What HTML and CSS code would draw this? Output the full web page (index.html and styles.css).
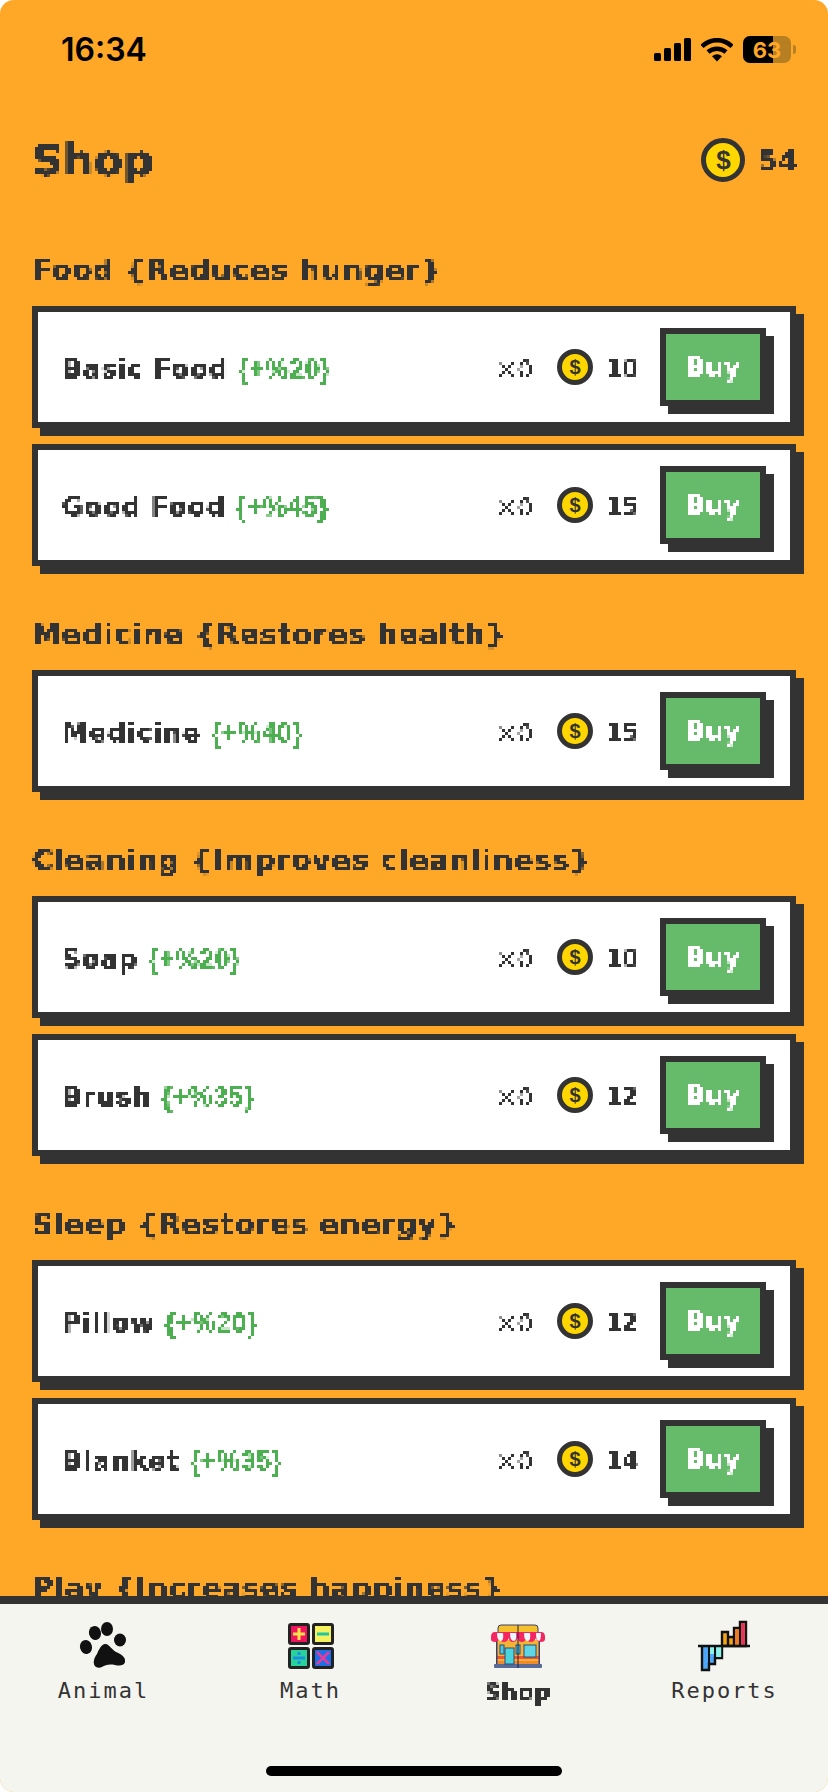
FILE: index.html
```html
<!DOCTYPE html>
<html lang="en">
<head>
<meta charset="utf-8">
<title>Shop</title>
<link rel="stylesheet" href="styles.css">
</head>
<body>
<svg class="defs" width="0" height="0" aria-hidden="true">
  <filter id="px3" x="0" y="0" width="100%" height="100%" color-interpolation-filters="sRGB">
    <feFlood x="1" y="1" width="1" height="1"/>
    <feComposite width="3" height="3"/>
    <feTile result="grid"/>
    <feComposite in="SourceGraphic" in2="grid" operator="in"/>
    <feMorphology operator="dilate" radius="1"/>
    <feComponentTransfer><feFuncA type="linear" slope="3" intercept="-0.5"/></feComponentTransfer>
  </filter>
</svg>
<div class="screen">
  <div class="status">
    <span class="time">16:34</span>
    <div class="status-icons">
      <svg class="signal" width="37" height="23" viewBox="0 0 37 23"><rect x="0" y="15" width="7" height="8" rx="1.500"/><rect x="10" y="10" width="7" height="13" rx="1.500"/><rect x="20" y="5" width="7" height="18" rx="1.500"/><rect x="30" y="0" width="7" height="23" rx="1.500"/></svg>
      <svg class="wifi" width="32" height="24" viewBox="0 0 32 24"><path d="M1 8.500C9.500 0 22.500 0 31 8.500"/><path d="M7 14C12 9.500 20 9.500 25 14"/><path class="wifi-dot" d="M11 18.200C14 15.500 18 15.500 21 18.200L16 23.500Z"/></svg>
      <div class="battery"><div class="battery-fill"></div><span class="battery-num">63</span></div>
      <div class="battery-tip"></div>
    </div>
  </div>
  <header class="head">
    <h1 class="title"><span class="px">Shop</span></h1>
    <div class="wallet">
      <span class="coin coin-lg">$</span>
      <span class="wallet-num"><span class="px">54</span></span>
    </div>
  </header>
  <main class="content">
    <section class="section">
      <h2 class="section-title"><span class="px">Food {Reduces hunger}</span></h2>
      <div class="card"><div class="name"><span class="px">Basic Food <span class="gain">{+%20}</span></span></div><span class="qty"><span class="px">×0</span></span><span class="coin">$</span><span class="price"><span class="px">10</span></span><button class="buy"><span class="px">Buy</span></button></div>
      <div class="card"><div class="name"><span class="px">Good Food <span class="gain">{+%45}</span></span></div><span class="qty"><span class="px">×0</span></span><span class="coin">$</span><span class="price"><span class="px">15</span></span><button class="buy"><span class="px">Buy</span></button></div>
    </section>
    <section class="section">
      <h2 class="section-title"><span class="px">Medicine {Restores health}</span></h2>
      <div class="card"><div class="name"><span class="px">Medicine <span class="gain">{+%40}</span></span></div><span class="qty"><span class="px">×0</span></span><span class="coin">$</span><span class="price"><span class="px">15</span></span><button class="buy"><span class="px">Buy</span></button></div>
    </section>
    <section class="section">
      <h2 class="section-title"><span class="px">Cleaning {Improves cleanliness}</span></h2>
      <div class="card"><div class="name"><span class="px">Soap <span class="gain">{+%20}</span></span></div><span class="qty"><span class="px">×0</span></span><span class="coin">$</span><span class="price"><span class="px">10</span></span><button class="buy"><span class="px">Buy</span></button></div>
      <div class="card"><div class="name"><span class="px">Brush <span class="gain">{+%35}</span></span></div><span class="qty"><span class="px">×0</span></span><span class="coin">$</span><span class="price"><span class="px">12</span></span><button class="buy"><span class="px">Buy</span></button></div>
    </section>
    <section class="section">
      <h2 class="section-title"><span class="px">Sleep {Restores energy}</span></h2>
      <div class="card"><div class="name"><span class="px">Pillow <span class="gain">{+%20}</span></span></div><span class="qty"><span class="px">×0</span></span><span class="coin">$</span><span class="price"><span class="px">12</span></span><button class="buy"><span class="px">Buy</span></button></div>
      <div class="card"><div class="name"><span class="px">Blanket <span class="gain">{+%35}</span></span></div><span class="qty"><span class="px">×0</span></span><span class="coin">$</span><span class="price"><span class="px">14</span></span><button class="buy"><span class="px">Buy</span></button></div>
    </section>
    <section class="section">
      <h2 class="section-title"><span class="px">Play {Increases happiness}</span></h2>
    </section>
  </main>
  <nav class="tabbar">
    <div class="tabs">
      <div class="tab">
        <svg class="tab-icon" width="52" height="52" viewBox="0 0 52 52"><ellipse cx="8" cy="27" rx="6" ry="7" transform="rotate(-15 8 27)" fill="#111"/><ellipse cx="17" cy="13" rx="6" ry="7" transform="rotate(-15 17 13)" fill="#111"/><ellipse cx="29" cy="9" rx="6" ry="7" fill="#111"/><ellipse cx="42" cy="20" rx="6" ry="6.500" fill="#111"/><path d="M18 47C14 44 16 38 19 34C21 29 24 23 28 24C32 25 34 30 38 32C43 34 48 37 47 42C46 46 41 46 37 45C31 44 27 45 24 47C22 48 20 48 18 47Z" fill="#111"/></svg>
        <span class="tab-label">Animal</span>
      </div>
      <div class="tab">
        <svg class="tab-icon" width="52" height="52" viewBox="0 0 52 52"><rect x="4.500" y="4.500" width="19" height="19" rx="1.500" fill="#F0135D" stroke="#222" stroke-width="3"/><path d="M14 8V20M8 14H20" stroke="#FFE24A" stroke-width="3"/><rect x="28.500" y="4.500" width="19" height="19" rx="1.500" fill="#F4F25E" stroke="#222" stroke-width="3"/><path d="M32 14H44" stroke="#1FC7A0" stroke-width="3"/><rect x="4.500" y="28.500" width="19" height="19" rx="1.500" fill="#27D39A" stroke="#222" stroke-width="3"/><path d="M8 38H20" stroke="#1C8FE0" stroke-width="3"/><path d="M12.500 32h3v3h-3zM12.500 41h3v3h-3z" fill="#1C8FE0"/><rect x="28.500" y="28.500" width="19" height="19" rx="1.500" fill="#1B6FE8" stroke="#222" stroke-width="3"/><path d="M32 32L44 44M44 32L32 44" stroke="#E83A9A" stroke-width="2.500"/></svg>
        <span class="tab-label">Math</span>
      </div>
      <div class="tab">
        <svg class="tab-icon" width="54" height="52" viewBox="0 0 54 52"><path d="M7 13V8Q7 5 10 5H44Q47 5 47 8V13Z" fill="#F6C02C" stroke="#3B3F6B" stroke-width="1"/><rect x="5" y="20" width="44" height="25" fill="#F6B233"/><rect x="5" y="36" width="44" height="3" fill="#F0552F"/><rect x="5" y="41" width="44" height="3" fill="#F28A2C"/><rect x="5" y="20" width="1.500" height="25" fill="#3B3F6B"/><rect x="47.500" y="20" width="1.500" height="25" fill="#3B3F6B"/><rect x="3" y="44" width="48" height="4" rx="1" fill="#5A6A96"/><path d="M0 17Q0 12 4 12H50Q54 12 54 17V19Q54 22 50 22Q46 22 45 18Q43 22 40 22Q36 22 36 18Q34 22 31 22Q27 22 27 18Q25 22 22 22Q18 22 18 18Q16 22 13 22Q9 22 9 18Q7 22 4 22Q0 22 0 19Z" fill="#F5265F"/><path d="M6 13H12Q13 20 10 21Q6 21 6 13ZM19 13H25Q26 20 23 21Q19 21 19 13ZM33 13H39Q40 20 37 21Q33 21 33 13ZM45 13H50Q50 20 48 21Q45 21 45 13Z" fill="#E9F8FC"/><rect x="9" y="25" width="4" height="9" fill="#4CC9DC" stroke="#2A4A78"/><rect x="14" y="28" width="9" height="16" fill="#4CD4DC" stroke="#2A4A78"/><rect x="25" y="25" width="4" height="9" fill="#4CC9DC" stroke="#2A4A78"/><rect x="33" y="25" width="12" height="12" fill="#5FD6E6" stroke="#2A4A78"/><rect x="26.500" y="5" width="1" height="43" fill="#1B1F4A"/></svg>
        <span class="tab-label tab-label-on"><span class="px">Shop</span></span>
      </div>
      <div class="tab">
        <svg class="tab-icon" width="54" height="52" viewBox="0 0 54 52"><path d="M24 26V12H30V26ZM30 26V17H36V26ZM36 26V8H42V26ZM42 26V2H48V26Z" fill="#F2A516" stroke="#111" stroke-width="2.400"/><rect x="43.200" y="3.200" width="3.600" height="21.600" fill="#E8345C"/><rect x="37.200" y="9.200" width="3.600" height="15.600" fill="#EE7A24"/><path d="M4 26V50H11V44H17V38H24V26" fill="#4EA6F8" stroke="#111" stroke-width="2.400"/><path d="M11 26V44M17 26V38" stroke="#111" stroke-width="2"/><rect x="18.200" y="27" width="5" height="10" fill="#8FF2E8"/><rect x="12" y="27" width="4" height="7" fill="#8FF2E8"/><path d="M0 26H52" stroke="#111" stroke-width="2.600"/></svg>
        <span class="tab-label">Reports</span>
      </div>
    </div>
    <div class="home-bar"></div>
  </nav>
</div>
</body>
</html>
```
FILE: styles.css
```css
* { box-sizing: border-box; }
html, body { margin: 0; padding: 0; background: #fff; }
body { width: 828px; height: 1792px; overflow: hidden; font-family: "DejaVu Sans", "Noto Sans", sans-serif; color: #333; }
.defs { position: absolute; }
.px { filter: url(#px3); display: inline-block; padding: 2px 0; }

.screen { width: 828px; height: 1792px; display: flex; flex-direction: column; background: #FFA726; border-radius: 14px; overflow: hidden; }

.status { height: 136px; flex: none; display: flex; justify-content: space-between; align-items: flex-start; padding: 30px 32px 0 61px; }
.time { font-family: "Inter", "Liberation Sans", sans-serif; font-weight: 600; font-size: 32px; line-height: 40px; color: #000; }
.status-icons { display: flex; align-items: center; gap: 10px; padding-top: 6px; }
.signal rect { fill: #000; }
.wifi path { fill: none; stroke: #000; stroke-width: 4.500; }
.wifi .wifi-dot { fill: #000; stroke: none; }
.battery { position: relative; width: 48px; height: 27px; border-radius: 7px; background: #B57F22; overflow: hidden; }
.battery-fill { width: 30px; height: 100%; background: #000; }
.battery-num { position: absolute; inset: 0; display: flex; align-items: center; justify-content: center; font-family: "Inter", "Liberation Sans", sans-serif; font-weight: 700; font-size: 22px; color: #FFA726; }
.battery-tip { width: 3px; height: 9px; margin-left: -8px; border-radius: 0 3px 3px 0; background: #B57F22; }

.head { flex: none; display: flex; justify-content: space-between; align-items: center; padding: 0 30px 0 32px; height: 64px; margin-top: -8px; }
.title { margin: 0; font-size: 43px; font-weight: 700; line-height: 64px; letter-spacing: 0; color: #333; }
.wallet { display: flex; align-items: center; gap: 13px; }
.wallet-num { font-size: 27px; font-weight: 700; letter-spacing: 1px; }

.coin { flex: none; display: flex; align-items: center; justify-content: center; width: 36px; height: 36px; border: 5px solid #333; border-radius: 50%; background: #FFD600; color: #333; font-family: "Liberation Sans", sans-serif; font-size: 20px; font-weight: 700; line-height: 1; }
.coin-lg { width: 44px; height: 44px; font-size: 26px; }

.content { flex: 1; min-height: 0; overflow: hidden; padding: 58px 32px 0; }
.section { margin-bottom: 48px; }
.section-title { margin: 0 0 16px; height: 40px; line-height: 36px; font-size: 29px; font-weight: 700; color: #333; white-space: nowrap; letter-spacing: 0.7px; }

.card { display: flex; align-items: center; height: 122px; padding: 0 24px; background: #fff; border: 6px solid #333; box-shadow: 8px 8px 0 #333; margin-bottom: 16px; }
.card:last-child { margin-bottom: 0; }
.name { flex: 1; min-width: 0; padding-top: 4px; font-size: 26px; font-weight: 700; white-space: nowrap; letter-spacing: 0.9px; }
.gain { color: #4CAF50; font-family: "Liberation Sans", sans-serif; font-weight: 700; font-size: 27px; letter-spacing: 0.300px; }
.qty { padding-top: 4px; font-size: 25px; font-weight: 400; margin-right: 24px; }
.price { width: 44px; padding-top: 4px; margin-left: 13px; margin-right: 10px; font-size: 24px; font-weight: 700; letter-spacing: -1px; }

.buy { flex: none; width: 106px; height: 78px; padding: 0; background: #66BB6A; border: 6px solid #333; box-shadow: 8px 8px 0 #333; color: #fff; font-family: inherit; font-size: 26px; font-weight: 700; border-radius: 0; }

.tabbar { flex: none; height: 196px; background: #F5F5F0; border-top: 8px solid #333; display: flex; flex-direction: column; position: relative; }
.tabs { display: grid; grid-template-columns: repeat(4, 207px); padding-top: 16px; }
.tab { display: flex; flex-direction: column; align-items: center; gap: 4px; }
.tab-icon { display: block; }
.tab-label { font-family: "DejaVu Sans Mono", "Liberation Mono", monospace; font-size: 22px; line-height: 30px; color: #333; letter-spacing: 2px; }
.tab-label-on { font-family: "DejaVu Sans", sans-serif; font-weight: 700; font-size: 23px; line-height: 28px; letter-spacing: 0.500px; }
.home-bar { position: absolute; left: 266px; bottom: 16px; width: 296px; height: 10px; border-radius: 5px; background: #000; }
```
